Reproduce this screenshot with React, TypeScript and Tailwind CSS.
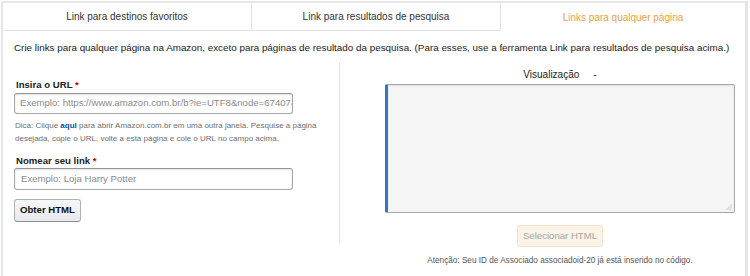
export default function App() {
  return (
    <div className="w-[750px] h-[276px] bg-white pl-px pr-[2px] pt-px font-['Liberation_Sans',Arial,sans-serif] text-[#333]">
      <div className="h-[275px] border-l-2 border-r-[3px] border-t-2 border-[#e6e6e6]">
        {/* Tabs */}
        <div className="flex h-[28px] text-[10px]">
          <div className="w-[249px] border-r border-b border-[#e3e3e3] flex items-center justify-center">
            Link para destinos favoritos
          </div>
          <div className="w-[249px] border-r border-b border-[#e3e3e3] flex items-center justify-center">
            Link para resultados de pesquisa
          </div>
          <div className="flex-1 flex items-center justify-center text-[#eda13c]">
            Links para qualquer página
          </div>
        </div>

        <p className="pl-[11px] pt-[10px] text-[9.85px] leading-[13px] text-[#222]">
          Crie links para qualquer página na Amazon, exceto para páginas de resultado da pesquisa. (Para esses, use a ferramenta Link para resultados de pesquisa acima.)
        </p>

        <div className="flex mt-[8px]">
          {/* Left column */}
          <div className="w-[329px] ml-[11px] h-[181px] border-r border-[#e6e6e6] pt-[17px]">
            <label className="block pl-[2px] text-[9.6px] font-bold leading-[12px] text-[#222]">
              Insira o URL <span className="text-[#c40000]">*</span>
            </label>
            <div className="mt-[2px] w-[279px] h-[21px] border border-[#a6a6a6] border-t-[#949494] rounded-[3px] shadow-[inset_0_1px_2px_rgba(0,0,0,0.12)] flex items-center pl-[5px] overflow-hidden whitespace-nowrap text-[9.6px] text-[#8a8a8a]">
              Exemplo: https://www.amazon.com.br/b?ie=UTF8&amp;node=674074
            </div>
            <p className="mt-[5px] pl-px text-[8px] leading-[13px] text-[#6f6f6f]">
              Dica: Clique <span className="text-[#0a4f9c] font-bold">aqui</span> para abrir Amazon.com.br em uma outra janela. Pesquise a página
              <br />
              desejada, copie o URL, volte a esta página e cole o URL no campo acima.
            </p>
            <label className="block mt-[10px] pl-[2px] text-[9.6px] font-bold leading-[12px] text-[#222]">
              Nomear seu link <span className="text-[#c40000]">*</span>
            </label>
            <div className="mt-[1px] w-[279px] h-[22px] border border-[#a6a6a6] border-t-[#949494] rounded-[3px] shadow-[inset_0_1px_2px_rgba(0,0,0,0.12)] flex items-center pl-[6px] text-[9.6px] text-[#8a8a8a]">
              Exemplo: Loja Harry Potter
            </div>
            <button className="mt-[9px] w-[67px] h-[23px] rounded-[3px] border border-[#adb1b8] border-b-[#8d9096] bg-gradient-to-b from-[#f7f8fa] to-[#e7e9ec] text-[9.6px] font-bold text-[#111]">
              Obter HTML
            </button>
          </div>

          {/* Right column */}
          <div className="flex-1 pl-[45px] pr-[10px] flex flex-col items-center">
            <div className="w-[350px] text-center text-[10px] leading-[14px] text-[#222] pt-[6px]">
              Visualização<span className="ml-[14px]">-</span>
            </div>
            <div className="relative mt-[2px] w-[350px] h-[129px] bg-[#f5f5f5] border border-[#a8a8a8] border-l-[3px] border-l-[#3575c4] rounded-[2px] shadow-[inset_0_1px_2px_rgba(0,0,0,0.1)]">
              <svg className="absolute right-[2px] bottom-[2px]" width="7" height="7" viewBox="0 0 7 7">
                <circle cx="6" cy="2" r="0.6" fill="#999" />
                <circle cx="6" cy="4" r="0.6" fill="#999" />
                <circle cx="6" cy="6" r="0.6" fill="#999" />
                <circle cx="4" cy="4" r="0.6" fill="#999" />
                <circle cx="4" cy="6" r="0.6" fill="#999" />
                <circle cx="2" cy="6" r="0.6" fill="#999" />
              </svg>
            </div>
            <button disabled className="mt-[12px] w-[86px] h-[22px] rounded-[3px] border border-[#efe4cf] bg-[#faf3e6] text-[9.6px] text-[#a5a5a5]">
              Selecionar HTML
            </button>
            <p className="mt-[8px] text-[8.2px] leading-[12px] text-[#555]">
              Atenção: Seu ID de Associado associadoid-20 já está inserido no código.
            </p>
          </div>
        </div>
      </div>
    </div>
  );
}
